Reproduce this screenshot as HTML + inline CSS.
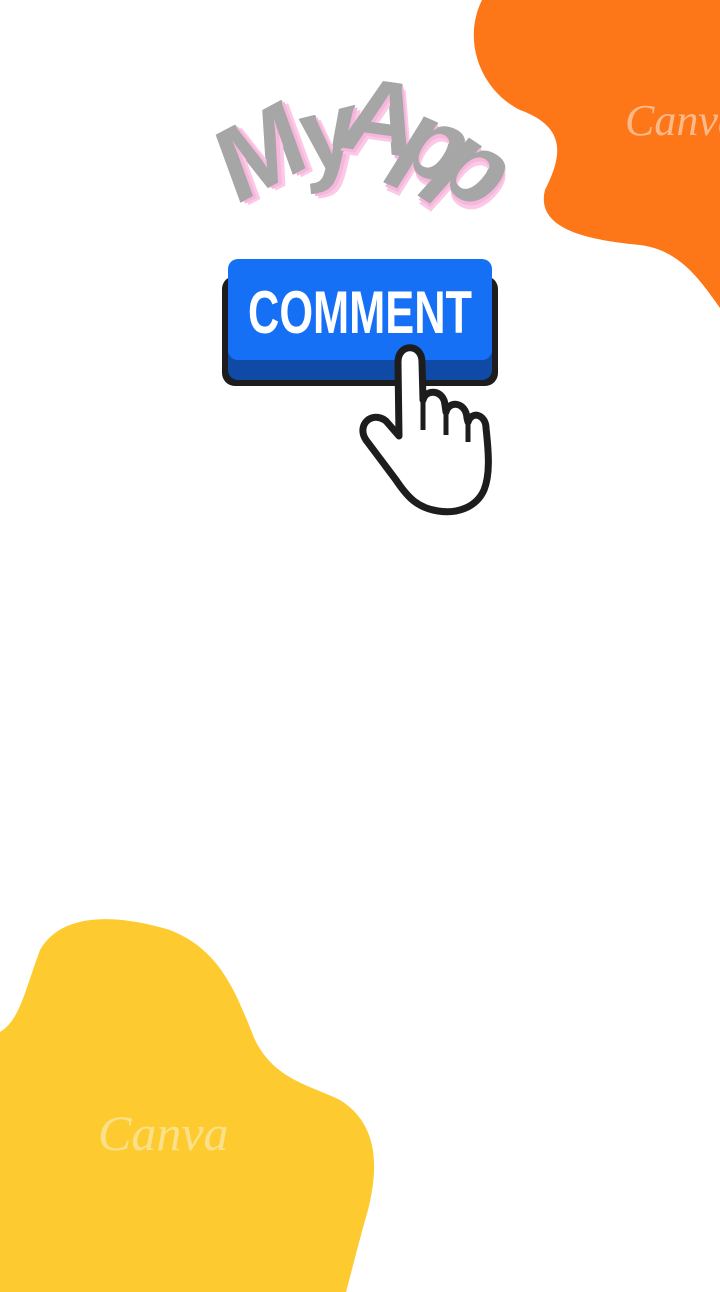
<!DOCTYPE html>
<html><head><style>
body{margin:0;width:720px;height:1292px;overflow:hidden;background:#fff;position:relative;font-family:"Liberation Sans",sans-serif}
.l{position:absolute;font-weight:bold;font-size:104px;color:#a6a6a6;text-shadow:3px 3px 0 #f7b6dc,6px 6px 0 #fbc8e6,1px 0 0 #a6a6a6,-1px 0 0 #a6a6a6;line-height:1;transform-origin:center}
</style></head><body>
<svg width="720" height="1292" style="position:absolute;left:0;top:0">
<path d="M482,0 C462,40 480,90 520,110 C570,128 560,160 545,190 C535,230 590,240 640,245 C680,250 700,280 720,308 L720,0 Z" fill="#fd7618"/>
<path d="M0,1032 C20,1020 25,990 40,950 C60,915 110,912 170,930 C220,950 235,990 255,1040 C275,1080 310,1085 340,1100 C380,1125 378,1170 368,1210 C358,1245 352,1270 346,1292 L0,1292 Z" fill="#fdcb2f"/>
<text x="625" y="135" font-family="Liberation Serif" font-style="italic" font-size="44" fill="#fbb98a">Canva</text>
<text x="98" y="1150" font-family="Liberation Serif" font-style="italic" font-size="50" fill="#fbe08a">Canva</text>
<rect x="222" y="276" width="276" height="110" rx="13" fill="#1d1d1d"/>
<rect x="228" y="300" width="264" height="80" rx="10" fill="#0f4aa6"/>
<rect x="228" y="259" width="264" height="101" rx="10" fill="#1670f5"/>
<text x="360" y="333" text-anchor="middle" font-family="Liberation Sans Narrow, Liberation Sans" font-weight="bold" font-size="60" fill="#fff" textLength="224" lengthAdjust="spacingAndGlyphs">COMMENT</text>
<path d="M398,362 C398,343 422,343 422,362 L423,400 C426,388 444,390 445,405 L446,412 C449,400 466,402 467,418 L468,422 C472,410 486,415 486,428 C489,455 490,475 484,490 C476,508 456,514 438,511 C418,508 408,498 396,480 L366,440 C356,425 372,410 386,421 L399,436 Z" fill="#fff" stroke="#1d1d1d" stroke-width="7" stroke-linejoin="round"/>
<path d="M423,400 L423,430 M446,412 L446,435 M468,422 L468,442" stroke="#1d1d1d" stroke-width="5"/>
</svg>
<div class="l" style="left:218px;top:100px;transform:rotate(-28deg) skewX(-8deg)">M</div>
<div class="l" style="left:300px;top:80px;transform:rotate(-14deg) skewX(-8deg)">y</div>
<div class="l" style="left:345px;top:66px;transform:rotate(8deg) skewX(-8deg)">A</div>
<div class="l" style="left:405px;top:92px;transform:rotate(24deg) skewX(-8deg)">p</div>
<div class="l" style="left:445px;top:115px;transform:rotate(34deg) skewX(-8deg)">p</div>
</body></html>
